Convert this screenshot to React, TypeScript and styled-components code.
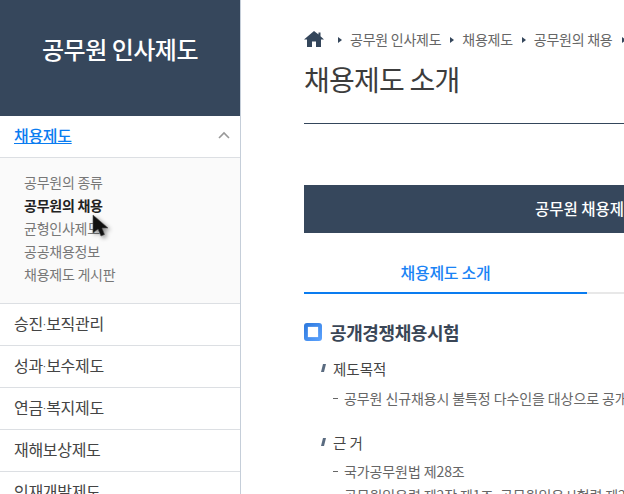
import React from "react";
import styled, { createGlobalStyle } from "styled-components";

const Global = createGlobalStyle`
  html, body { margin: 0; padding: 0; background: #fff; overflow: hidden; }
  body { font-family: "Noto Sans CJK KR", "Noto Sans", sans-serif; }
  * { box-sizing: border-box; }
`;
const Page = styled.div`
  position: relative; display: flex; width: 624px; height: 494px; overflow: hidden; background: #fff;
`;
const Sidebar = styled.aside`
  flex: 0 0 241px; height: 494px; border-right: 1px solid #c5ced9; overflow: hidden;
`;
const Brand = styled.div`
  height: 116px; background: #36475c; color: #fff; display: flex; align-items: center; justify-content: center;
  font-size: 24px; font-weight: 500; letter-spacing: -0.5px; padding-bottom: 20px;
`;
const ActiveHead = styled.div`
  height: 42px; display: flex; align-items: center; justify-content: space-between; padding: 0 10px 3px 14px;
  border-bottom: 1px solid #dcdfe3;
`;
const ActiveLink = styled.a`
  color: #0a7cf0; font-size: 16px; font-weight: 500; text-decoration: underline; letter-spacing: -0.3px; line-height: 20px;
`;
const SubList = styled.ul`
  list-style: none; margin: 0; padding: 13px 0 16px 24px; background: #fafafa; border-bottom: 1px solid #dcdfe3;
  height: 146px;
`;
const SubItem = styled.li<{ $on?: boolean }>`
  height: 23px; line-height: 23px; font-size: 14px; letter-spacing: -0.25px;
  color: ${p => (p.$on ? "#222" : "#777")}; font-weight: ${p => (p.$on ? 700 : 400)};
`;
const MenuItem = styled.div`
  height: 42px; display: flex; align-items: center; padding: 0 0 3px 14px; font-size: 16px; color: #444; letter-spacing: -0.3px;
  border-bottom: 1px solid #dcdfe3;
`;
const MiddleDot = styled.span`
  font-family: "Liberation Sans", sans-serif; font-size: 10px; letter-spacing: 0; vertical-align: 2px;
`;
const Main = styled.main`
  flex: 0 0 auto; width: 900px; padding: 0 0 0 63px;
`;
const Crumbs = styled.nav`
  display: flex; align-items: center; height: 20px; margin-top: 29px; font-size: 14px; color: #666; white-space: nowrap; letter-spacing: -0.25px;
`;
const HomeIcon = styled.svg`
  width: 20px; height: 18px; margin: -1px 14px 0 0; flex: none;
`;
const Arrow = styled.span`
  width: 0; height: 0; border-left: 4px solid #34465b; border-top: 3px solid transparent; border-bottom: 3px solid transparent;
  margin: 1px 8px 0 9px; flex: none;
  &:first-of-type { margin-left: 0; }
`;
const Title = styled.h1`
  margin: 9px 0 0; font-size: 28px; font-weight: 400; color: #3c3c3c; line-height: 43px; letter-spacing: -0.75px;
  height: 50px;
`;
const Rule = styled.div`
  height: 1px; background: #34465b; margin-top: 15px;
`;
const Band = styled.div`
  height: 48px; margin-top: 61px; background: #36475c; color: #fff; font-size: 15.5px; font-weight: 500;
  line-height: 46px; padding-left: 231px; white-space: nowrap;
`;
const Tabs = styled.div`
  display: flex; margin-top: 16px; height: 45px;
`;
const Tab = styled.div<{ $on?: boolean }>`
  width: 283px; text-align: center; line-height: 47px; height: 45px; font-size: 16px; font-weight: 500; letter-spacing: -0.3px;
  color: #1a83f5; border-bottom: 2px solid ${p => (p.$on ? "#0a7cf0" : "#e8e8e8")};
`;
const SectionHead = styled.div`
  display: flex; align-items: center; gap: 8px; margin-top: 26px; height: 24px;
`;
const Square = styled.span`
  width: 18px; height: 18px; border-radius: 3px; background: linear-gradient(135deg, #2b77dc, #5ea4ff);
  display: flex; align-items: center; justify-content: center; flex: none;
  &::after { content: ""; width: 10px; height: 10px; background: #fff; box-shadow: 0 0 1px #cfe2ff; }
`;
const SectionTitle = styled.h2`
  margin: 0; font-size: 18px; font-weight: 700; color: #3a4656; letter-spacing: -0.4px; line-height: 24px;
`;
const SubHead = styled.div<{ $gap: number }>`
  display: flex; align-items: center; margin: ${p => p.$gap}px 0 0 18px; height: 22px; font-size: 14.5px; color: #444; white-space: nowrap;
`;
const Slash = styled.span`
  width: 3px; height: 8px; background: #5a6b80; transform: skewX(-14deg); margin-right: 8px; flex: none;
`;
const Line = styled.div<{ $gap: number }>`
  display: flex; align-items: center; margin: ${p => p.$gap}px 0 0 29px; height: 22px; font-size: 14px; color: #666; white-space: nowrap; letter-spacing: -0.1px;
`;
const Dash = styled.span`
  width: 5px; height: 1px; background: #666; margin-right: 6px; flex: none;
`;
const Cursor = styled.svg`
  position: absolute; left: 92px; top: 214px; width: 20px; height: 26px; filter: drop-shadow(2px 2px 2px rgba(0,0,0,.45));
`;

export default function App() {
  return (
    <Page>
      <Global />
      <Sidebar>
        <Brand>공무원 인사제도</Brand>
        <ActiveHead>
          <ActiveLink>채용제도</ActiveLink>
          <svg width="12" height="8" viewBox="0 0 12 8" fill="none" stroke="#999" strokeWidth="1.6">
            <path d="M1 7 L6 2 L11 7" />
          </svg>
        </ActiveHead>
        <SubList>
          <SubItem>공무원의 종류</SubItem>
          <SubItem $on>공무원의 채용</SubItem>
          <SubItem>균형인사제도</SubItem>
          <SubItem>공공채용정보</SubItem>
          <SubItem>채용제도 게시판</SubItem>
        </SubList>
        <MenuItem><span>승진<MiddleDot>·</MiddleDot>보직관리</span></MenuItem>
        <MenuItem><span>성과<MiddleDot>·</MiddleDot>보수제도</span></MenuItem>
        <MenuItem><span>연금<MiddleDot>·</MiddleDot>복지제도</span></MenuItem>
        <MenuItem>재해보상제도</MenuItem>
        <MenuItem>인재개발제도</MenuItem>
      </Sidebar>
      <Main>
        <Crumbs>
          <HomeIcon viewBox="0 0 20 18" fill="#34465b">
            <path d="M10 1 L14.5 4.6 L14.5 2.5 L16.5 2.5 L16.5 6.2 L20 9.5 L17 9.5 L17 17 L12 17 L12 11.5 L8 11.5 L8 17 L3 17 L3 9.5 L0 9.5 Z" />
          </HomeIcon>
          <Arrow />공무원 인사제도
          <Arrow />채용제도
          <Arrow />공무원의 채용
          <Arrow />채용제도 소개
        </Crumbs>
        <Title>채용제도 소개</Title>
        <Rule />
        <Band>공무원 채용제도</Band>
        <Tabs>
          <Tab $on>채용제도 소개</Tab>
          <Tab>공무원 시험</Tab>
        </Tabs>
        <SectionHead>
          <Square />
          <SectionTitle>공개경쟁채용시험</SectionTitle>
        </SectionHead>
        <SubHead $gap={13}><Slash />제도목적</SubHead>
        <Line $gap={8}><Dash />공무원 신규채용시 불특정 다수인을 대상으로 공개경쟁시험을 실시합니다</Line>
        <SubHead $gap={22}><Slash />근 거</SubHead>
        <Line $gap={7}><Dash />국가공무원법 제28조</Line>
        <Line $gap={2}><Dash />공무원임용령 제2장 제1조, 공무원임용시험령 제2조</Line>
      </Main>
      <Cursor viewBox="0 0 20 26">
        <path d="M1 1 L1 19 L6 15 L9 22 L12.5 20.5 L10 14 L16 14 Z" fill="#111" stroke="#555" strokeWidth="0.6" />
      </Cursor>
    </Page>
  );
}
